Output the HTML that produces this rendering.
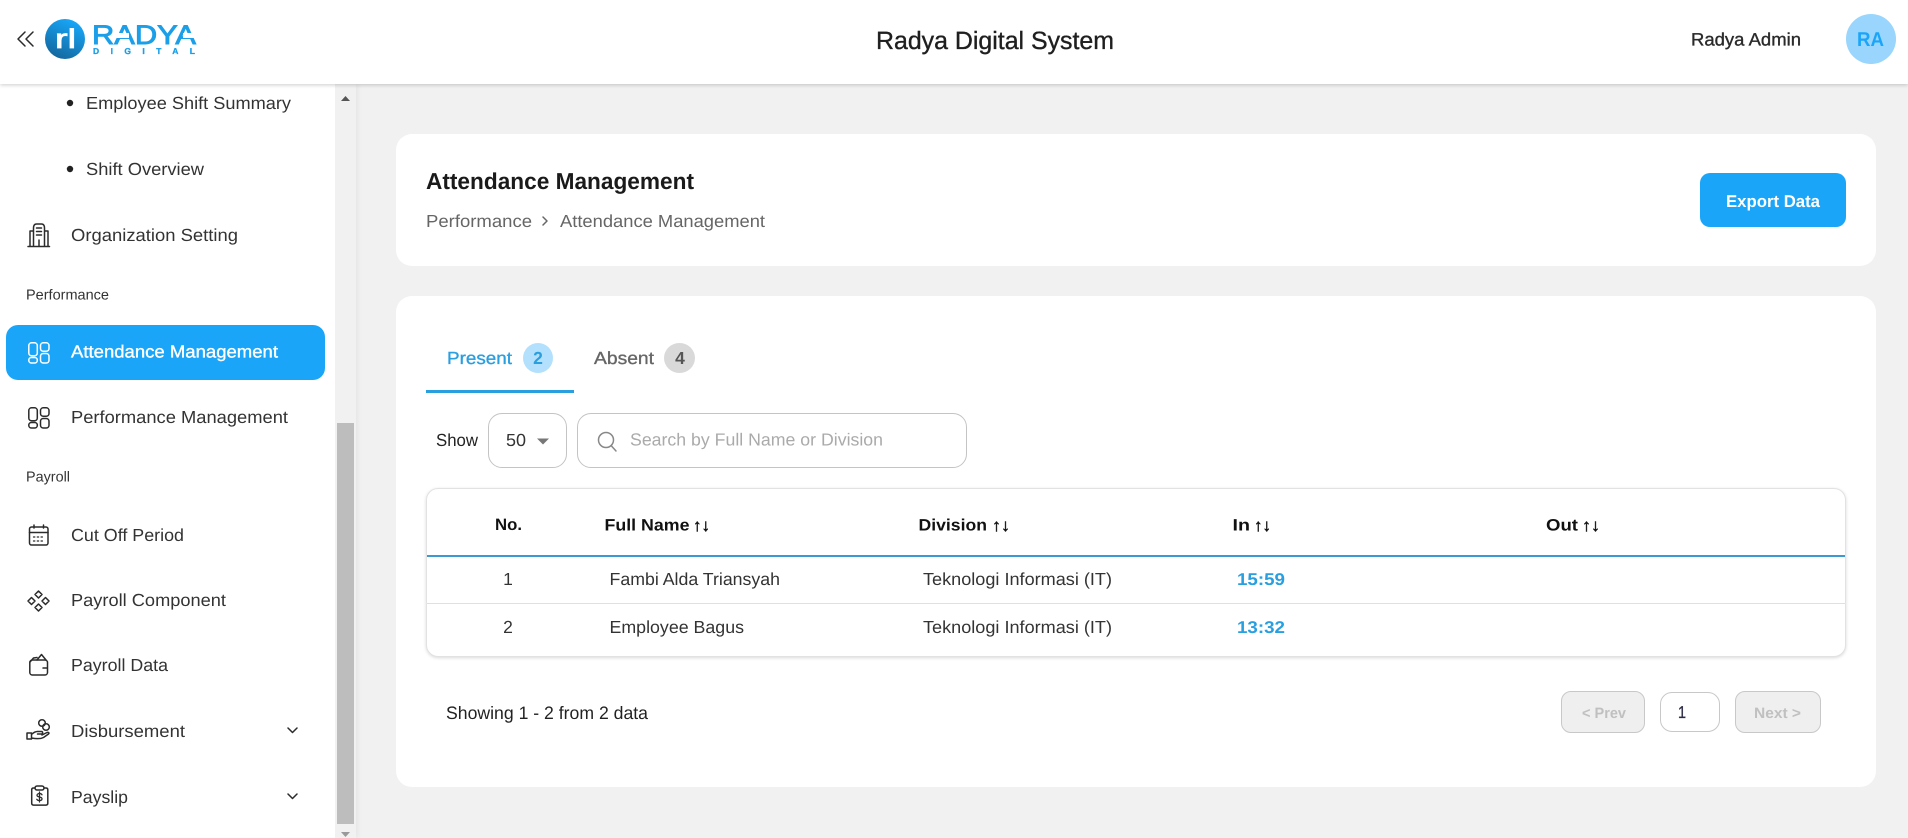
<!DOCTYPE html>
<html lang="en"><head><meta charset="utf-8"><title>Attendance Management</title>
<style>
html,body{margin:0;padding:0;width:1908px;height:838px;overflow:hidden;background:#f1f1f1}
.b{position:absolute;box-sizing:border-box}
svg{position:absolute;left:0;top:0}
text{font-family:"Liberation Sans",sans-serif;font-size:17.5px;fill:#333;text-rendering:geometricPrecision}
.bd{font-weight:700}
.md{stroke-width:.35px;paint-order:stroke}
.ic{fill:none;stroke:#2b2b2b;stroke-width:1.5;stroke-linecap:round;stroke-linejoin:round}
</style></head><body>
<div class="b" style="left:0;top:84px;width:356px;height:754px;background:#f1f1f1;box-shadow:2px 0 5px rgba(0,0,0,.05)"></div>
<div class="b" style="left:0;top:84px;width:335px;height:754px;background:#fff"></div>
<div class="b" style="left:337px;top:423px;width:17px;height:401px;background:#bdbdbd"></div>
<div class="b" style="left:0;top:0;width:1908px;height:84px;background:#fff;box-shadow:0 1px 4px rgba(0,0,0,.2)"></div>
<div class="b" style="left:396px;top:134px;width:1480px;height:132px;background:#fff;border-radius:16px"></div>
<div class="b" style="left:396px;top:296px;width:1480px;height:491px;background:#fff;border-radius:16px"></div>
<div class="b" style="left:1700px;top:173px;width:146px;height:54px;background:#1ba5f8;border-radius:10px"></div>
<div class="b" style="left:6px;top:325px;width:319px;height:55px;background:#1ba5f8;border-radius:12px"></div>
<div class="b" style="left:426px;top:390px;width:148px;height:3px;background:#2a9fe0"></div>
<div class="b" style="left:523px;top:343px;width:30px;height:30px;background:#b3e0fd;border-radius:50%"></div>
<div class="b" style="left:664px;top:343px;width:31px;height:30px;background:#d9d9d9;border-radius:50%"></div>
<div class="b" style="left:488px;top:413px;width:79px;height:55px;border:1px solid #c4c4c4;border-radius:14px"></div>
<div class="b" style="left:577px;top:413px;width:390px;height:55px;border:1px solid #c4c4c4;border-radius:14px"></div>
<div class="b" style="left:426px;top:488px;width:1420px;height:169px;background:#fff;border:1px solid #e2e2e2;border-radius:12px;box-shadow:0 1px 3px rgba(0,0,0,.15)"></div>
<div class="b" style="left:427px;top:555px;width:1418px;height:2px;background:#3d9ad1"></div>
<div class="b" style="left:427px;top:603px;width:1418px;height:1px;background:#e0e0e0"></div>
<div class="b" style="left:1561px;top:691px;width:84px;height:42px;background:#efefef;border:1px solid #c8c8c8;border-radius:10px"></div>
<div class="b" style="left:1660px;top:692px;width:60px;height:40px;background:#fff;border:1px solid #c8c8c8;border-radius:12px"></div>
<div class="b" style="left:1735px;top:691px;width:86px;height:42px;background:#efefef;border:1px solid #c8c8c8;border-radius:10px"></div>
<div class="b" style="left:1846px;top:14px;width:50px;height:50px;background:#99d5fc;border-radius:50%"></div>

<svg width="1908" height="838" viewBox="0 0 1908 838">
<defs><linearGradient id="g" x1="0.8" y1="0.05" x2="0.35" y2="1"><stop offset="0" stop-color="#18a8fa"/><stop offset="1" stop-color="#13689f"/></linearGradient></defs>

<!-- header -->
<path class="ic" d="M25 32l-7 7 7 7M33 32l-7 7 7 7" stroke-width="1.3"/>
<circle cx="65" cy="39" r="20" fill="url(#g)"/>
<text x="55" y="48" textLength="21" lengthAdjust="spacingAndGlyphs" style="font-size:27px;fill:#fff;stroke:#fff;stroke-width:.8px">rl</text>
<text x="92" y="44" textLength="104" lengthAdjust="spacingAndGlyphs" style="font-size:27px;fill:#1b9fe8;stroke:#1b9fe8;stroke-width:.9px">RADYA</text>
<rect x="115" y="33" width="14" height="5" fill="#fff"/>
<rect x="183" y="33" width="14" height="5" fill="#fff"/>
<text x="93" y="54" textLength="102" style="font-size:8.500px;fill:#1b9fe8;stroke:#1b9fe8;stroke-width:.3px" class="bd">DIGITAL</text>
<text x="876" y="49" textLength="238" lengthAdjust="spacingAndGlyphs" class="md" style="font-size:25px;fill:#1f1f1f;stroke:#1f1f1f">Radya Digital System</text>
<text x="1691" y="45.500" textLength="110" lengthAdjust="spacingAndGlyphs" class="md" style="font-size:18px;fill:#2a2a2a;stroke:#2a2a2a">Radya Admin</text>
<text x="1857" y="46" textLength="27" lengthAdjust="spacingAndGlyphs" class="bd" style="font-size:20px;fill:#1ba5f8">RA</text>

<!-- scrollbar arrows -->
<path d="M341 101l4.500-5 4.500 5z" fill="#555"/>
<path d="M341 832l4.500 5 4.500-5z" fill="#999"/>

<!-- sidebar -->
<circle cx="70" cy="103" r="3.200" fill="#222"/>
<circle cx="70" cy="169" r="3.200" fill="#222"/>
<text x="86" y="109" textLength="205" lengthAdjust="spacingAndGlyphs">Employee Shift Summary</text>
<text x="86" y="175" textLength="118" lengthAdjust="spacingAndGlyphs">Shift Overview</text>
<text x="71" y="241" textLength="167" lengthAdjust="spacingAndGlyphs">Organization Setting</text>
<text x="26" y="299.500" textLength="83" lengthAdjust="spacingAndGlyphs" style="font-size:14.500px">Performance</text>
<text x="71" y="357.500" textLength="207" lengthAdjust="spacingAndGlyphs" class="md" style="fill:#fff;stroke:#fff">Attendance Management</text>
<text x="71" y="423" textLength="217" lengthAdjust="spacingAndGlyphs">Performance Management</text>
<text x="26" y="481.500" textLength="44" lengthAdjust="spacingAndGlyphs" style="font-size:14.500px">Payroll</text>
<text x="71" y="541" textLength="113" lengthAdjust="spacingAndGlyphs">Cut Off Period</text>
<text x="71" y="606" textLength="155" lengthAdjust="spacingAndGlyphs">Payroll Component</text>
<text x="71" y="671" textLength="97" lengthAdjust="spacingAndGlyphs">Payroll Data</text>
<text x="71" y="737" textLength="114" lengthAdjust="spacingAndGlyphs">Disbursement</text>
<text x="71" y="803" textLength="57" lengthAdjust="spacingAndGlyphs">Payslip</text>

<!-- building icon -->
<path class="ic" stroke-width="1.200" d="M28 246.500h21.500M33.500 246V228c0-2.500 1-4 3-4h5c2 0 3 1.500 3 4V246M33.500 231h-3.500v15M44.500 231h3.500v15M36.500 228h5M36.500 231.500h5M36.500 235h5M39 246v-6"/>
<!-- grid icons -->
<g class="ic" style="stroke:#fff"><rect x="28.800" y="342.800" width="8.500" height="13" rx="2.800"/><rect x="40.500" y="342.800" width="8.500" height="8.500" rx="2.800"/><rect x="28.800" y="357.500" width="8.500" height="5.500" rx="2.500"/><rect x="40.500" y="353.500" width="8.500" height="9.500" rx="2.800"/></g>
<g class="ic"><rect x="28.800" y="407.800" width="8.500" height="13" rx="2.800"/><rect x="40.500" y="407.800" width="8.500" height="8.500" rx="2.800"/><rect x="28.800" y="422.500" width="8.500" height="5.500" rx="2.500"/><rect x="40.500" y="418.500" width="8.500" height="9.500" rx="2.800"/></g>
<!-- calendar -->
<g class="ic"><rect x="29.500" y="527" width="18.500" height="18" rx="2"/><path d="M29.500 532.500h18.500M34 525v3M43.500 525v3"/><path stroke-width="1.300" stroke-dasharray="1.300 2.500" d="M33.500 537h11M33.500 541h11"/></g>
<!-- diamonds -->
<g class="ic" stroke-width="1.200"><path d="M38.500 591l3.500 3.500-3.500 3.500-3.500-3.500zM31.500 597.500l3.500 3.500-3.500 3.500-3.500-3.500zM45.500 597.500l3.500 3.500-3.500 3.500-3.500-3.500zM38.500 604l3.500 3.500-3.500 3.500-3.500-3.500z"/></g>
<!-- wallet -->
<g class="ic" stroke-width="1.400"><rect x="29.800" y="660" width="17.700" height="15" rx="2.500"/><path d="M30 662l3.500-4 3.500-.5M37 660l4.500-5.500 4.500 5.500M43 668h4"/></g>
<!-- hand -->
<g class="ic" stroke-width="1.300"><path d="M27 733h4.500v6H27zM31.500 734.500c2-2 3.500-3 6-3h4c1.500 0 1.500 2.500 0 2.500h-4M31.500 738c5 1 9 1 12-.5l5-3.500c1-1 0-2-1.500-1.500l-5 2.500"/><circle cx="42" cy="723" r="3.300"/><circle cx="46" cy="727" r="3.300"/></g>
<!-- clipboard -->
<g class="ic" stroke-width="1.500"><path d="M35 788h-1.500c-1.200 0-1.800.600-1.800 1.800v13.500c0 1.200.600 1.800 1.800 1.800h12.500c1.200 0 1.800-.600 1.800-1.800v-13.500c0-1.200-.600-1.800-1.800-1.800H44"/><rect x="35" y="786" width="9" height="4" rx="2"/><path stroke-width="1.300" d="M42 794.800c-.5-1-1.500-1.300-2.500-1.300s-2.500.6-2.500 1.800c0 2.500 5 1 5 3.500 0 1.200-1.200 1.800-2.500 1.800s-2.200-.5-2.700-1.300M39.500 792v10"/></g>
<!-- chevrons -->
<path class="ic" stroke-width="1.800" d="M288 728l4.500 4.500 4.500-4.500M288 794l4.500 4.500 4.500-4.500"/>

<!-- card 1 -->
<text x="426" y="189" textLength="268" lengthAdjust="spacingAndGlyphs" class="bd" style="font-size:23px;fill:#1a1a1a">Attendance Management</text>
<text x="426" y="227" textLength="106" lengthAdjust="spacingAndGlyphs" style="fill:#666">Performance</text>
<path class="ic" style="stroke:#666" stroke-width="1.200" d="M543 217l4 4-4 4"/>
<text x="560" y="227" textLength="205" lengthAdjust="spacingAndGlyphs" style="fill:#666">Attendance Management</text>
<text x="1726" y="207" textLength="94" lengthAdjust="spacingAndGlyphs" class="bd" style="font-size:17px;fill:#fff">Export Data</text>

<!-- tabs -->
<text x="447" y="364" textLength="65" lengthAdjust="spacingAndGlyphs" class="md" style="fill:#2a9fe0;stroke:#2a9fe0">Present</text>
<text x="538" y="364" text-anchor="middle" class="bd" style="fill:#2a9fe0">2</text>
<text x="594" y="364" textLength="60" lengthAdjust="spacingAndGlyphs" class="md" style="fill:#666;stroke:#666">Absent</text>
<text x="680" y="364" text-anchor="middle" class="bd" style="fill:#555">4</text>

<!-- filter -->
<text x="436" y="446" textLength="42" lengthAdjust="spacingAndGlyphs" style="fill:#222">Show</text>
<text x="506" y="446" textLength="20" lengthAdjust="spacingAndGlyphs" style="fill:#333">50</text>
<path d="M537 438.500h12l-6 6z" fill="#777"/>
<g class="ic" style="stroke:#888" stroke-width="1.400"><circle cx="606" cy="440" r="7.500"/><path d="M611.500 446l4.500 5"/></g>
<text x="630" y="445.500" textLength="253" lengthAdjust="spacingAndGlyphs" style="fill:#aaa">Search by Full Name or Division</text>

<!-- table -->
<text x="495" y="530" textLength="27" lengthAdjust="spacingAndGlyphs" class="bd" style="font-size:16.500px;fill:#111">No.</text>
<text x="604.500" y="530.500" textLength="85" lengthAdjust="spacingAndGlyphs" class="bd" style="font-size:16.500px;fill:#111">Full Name</text>
<text x="693" y="531" textLength="17" lengthAdjust="spacingAndGlyphs" class="bd" style="font-size:17px;fill:#111;stroke:#111;stroke-width:.5px">↑↓</text>
<text x="918.500" y="530.500" textLength="68.500" lengthAdjust="spacingAndGlyphs" class="bd" style="font-size:16.500px;fill:#111">Division</text>
<text x="992" y="531" textLength="18" lengthAdjust="spacingAndGlyphs" class="bd" style="font-size:17px;fill:#111;stroke:#111;stroke-width:.5px">↑↓</text>
<text x="1232.500" y="530.500" textLength="17.500" lengthAdjust="spacingAndGlyphs" class="bd" style="font-size:16.500px;fill:#111">In</text>
<text x="1254" y="531" textLength="17" lengthAdjust="spacingAndGlyphs" class="bd" style="font-size:17px;fill:#111;stroke:#111;stroke-width:.5px">↑↓</text>
<text x="1546" y="530.500" textLength="32" lengthAdjust="spacingAndGlyphs" class="bd" style="font-size:16.500px;fill:#111">Out</text>
<text x="1582" y="531" textLength="18" lengthAdjust="spacingAndGlyphs" class="bd" style="font-size:17px;fill:#111;stroke:#111;stroke-width:.5px">↑↓</text>

<text x="508" y="585" text-anchor="middle">1</text>
<text x="609.500" y="585" textLength="170.500" lengthAdjust="spacingAndGlyphs">Fambi Alda Triansyah</text>
<text x="923" y="585" textLength="189" lengthAdjust="spacingAndGlyphs">Teknologi Informasi (IT)</text>
<text x="1237" y="585" textLength="48" lengthAdjust="spacingAndGlyphs" class="bd" style="font-size:17px;fill:#2a9fe0">15:59</text>
<text x="508" y="633" text-anchor="middle">2</text>
<text x="609.500" y="633" textLength="134.500" lengthAdjust="spacingAndGlyphs">Employee Bagus</text>
<text x="923" y="633" textLength="189" lengthAdjust="spacingAndGlyphs">Teknologi Informasi (IT)</text>
<text x="1237" y="633" textLength="48" lengthAdjust="spacingAndGlyphs" class="bd" style="font-size:17px;fill:#2a9fe0">13:32</text>

<!-- footer -->
<text x="446" y="719" textLength="202" lengthAdjust="spacingAndGlyphs" style="font-size:18px;fill:#222">Showing 1 - 2 from 2 data</text>
<text x="1582" y="718" textLength="44" lengthAdjust="spacingAndGlyphs" class="bd" style="font-size:15px;fill:#c0c0c0">&lt; Prev</text>
<text x="1678" y="718" textLength="8" lengthAdjust="spacingAndGlyphs" class="md" style="font-size:17px;fill:#2b2b45;stroke:#2b2b45">1</text>
<text x="1754" y="718" textLength="47" lengthAdjust="spacingAndGlyphs" class="bd" style="font-size:15px;fill:#c0c0c0">Next &gt;</text>
</svg>
</body></html>
